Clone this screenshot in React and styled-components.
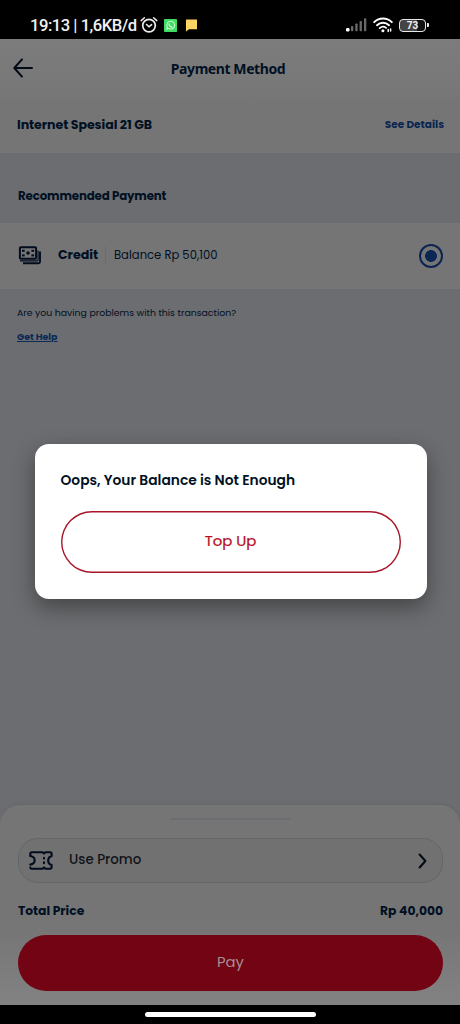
import React from "react";
import styled, { createGlobalStyle } from "styled-components";

const GlobalStyle = createGlobalStyle`
  * {
    box-sizing: border-box;
  }

  body {
    margin: 0;
    background: #000;
    font-family: "Poppins", "Inter", sans-serif;
    color: #011023;
  }

  h1, h2, p {
    margin: 0;
  }

  button {
    font-family: inherit;
    padding: 0;
  }
`;

//Icons
const AlarmIcon = () => (
  <svg width="18" height="18" viewBox="0 0 18 18" fill="none" stroke="#eee" strokeLinecap="round">
    <circle cx="9" cy="9.6" r="6.3" strokeWidth="1.7" />
    <path d="M1.2 4.6 4.4 1.8M16.8 4.6 13.6 1.8" strokeWidth="1.5" />
    <path d="m6.5 8.5 2.6 2.3 2.5-2.1" strokeWidth="1.6" />
  </svg>
);

const WhatsappIcon = () => (
  <svg width="13" height="13" viewBox="0 0 13 13">
    <rect width="13" height="13" rx="0.8" fill="#3fdc62" />
    <circle cx="6.7" cy="6.2" r="4" fill="none" stroke="#d5ffdc" strokeWidth="1" />
    <path d="m2 11 1-3.2 2 2Z" fill="#d5ffdc" />
    <path d="M5.1 4.5c0 2 1.5 3.5 3.4 3.6" fill="none" stroke="#d5ffdc" strokeWidth="1.3" />
  </svg>
);

const MessageIcon = () => (
  <svg width="13" height="13" viewBox="0 0 13 13">
    <path d="M1 0.5h11v9.7H4L1 12.5Z" fill="#ffd362" />
  </svg>
);

const SignalIcon = () => (
  <svg width="21" height="14" viewBox="0 0 21 14" fill="#6a6a6a">
    <rect x="0" y="10" width="3.5" height="3.4" rx="1.2" fill="#fff" />
    <rect x="5" y="8" width="2.3" height="5.2" rx="0.7" />
    <rect x="9.3" y="5.5" width="2.3" height="7.7" rx="0.7" />
    <rect x="13.6" y="3" width="2.3" height="10.2" rx="0.7" />
    <rect x="18" y="0.3" width="2.3" height="12.9" rx="0.7" />
  </svg>
);

const WifiIcon = () => (
  <svg width="20" height="16" viewBox="0 0 20 16" fill="none" stroke="#fff" strokeLinecap="round">
    <path d="M1.2 5.1c5-4.8 12.6-4.8 17.6 0" strokeWidth="2" />
    <path d="M4 8.2c3.5-3.2 8.5-3.2 12 0" strokeWidth="2" />
    <path d="M6.7 11.1c2-1.7 4.6-1.7 6.4-.2" strokeWidth="1.8" />
    <circle cx="9.9" cy="13.7" r="1.5" fill="#fff" stroke="none" />
    <path d="M15.2 12.4v2M17.6 12v2" strokeWidth="1.5" />
  </svg>
);

const BackIcon = () => (
  <svg width="20" height="20" viewBox="0 0 20 20" fill="none" stroke="#030b16" strokeWidth="2" strokeLinecap="round" strokeLinejoin="round">
    <path d="M9 1.4 1.3 10 9 18.6M1.3 10H19" />
  </svg>
);

const CashIcon = () => (
  <svg width="23" height="21" viewBox="0 0 23 21" fill="none" stroke="#020d1f" strokeLinejoin="round">
    <rect x="1.9" y="1.2" width="16.2" height="11.6" rx="1" strokeWidth="2" />
    <path d="M20.1 4.6v9q0 1.3-1.3 1.3H2" strokeWidth="1.1" />
    <path d="M22 5.4v10.4q0 1.5-1.5 1.5H5" strokeWidth="1.9" />
    <g fill="#020d1f" stroke="none">
      <circle cx="10" cy="7" r="1.8" />
      <rect x="4" y="3.8" width="2.7" height="2" />
      <rect x="13.4" y="3.8" width="2.7" height="2" />
      <rect x="4" y="8.4" width="2.7" height="2" />
      <rect x="13.4" y="8.4" width="2.7" height="2" />
    </g>
  </svg>
);

const TicketIcon = () => (
  <svg width="24" height="19" viewBox="0 0 24 19" fill="none" stroke="#020d1f" strokeWidth="2.1" strokeLinecap="round" strokeLinejoin="round">
    <path d="M1.3 4.8V2.7q0-1.4 1.5-1.4h10.8l1.4 1.3 1.4-1.3h4.7q1.5 0 1.5 1.4v2.2c-4.6 1.5-4.6 7.7 0 9.2v2.2q0 1.4-1.5 1.4h-4.7L15 16.4l-1.4 1.3H2.8q-1.5 0-1.5-1.2" />
    <path d="M1.3 5c5.8 1 5.8 7.4 0 8.6" />
    <path d="M15 6.9v.7M15 11.2v1" />
  </svg>
);

const ChevronIcon = () => (
  <svg width="9" height="16" viewBox="0 0 9 16" fill="none" stroke="#030b18" strokeWidth="2.1" strokeLinecap="round" strokeLinejoin="round">
    <path d="M1.6 1.5 7.4 8l-5.8 6.5" />
  </svg>
);

const StatusBar = () => (
  <CssStatus>
    <Clock>19:13 | 1,6KB/d</Clock>
    <AlarmIcon />
    <Notifications>
      <WhatsappIcon />
      <MessageIcon />
    </Notifications>
    <StatusRight>
      <SignalIcon />
      <WifiIcon />
      <Battery>73</Battery>
    </StatusRight>
  </CssStatus>
);

const App = () => {
  return (
    <Screen>
      <GlobalStyle />
      <StatusBar />
      <Page>
        <Header>
          <BackIcon />
          <Title>Payment Method</Title>
        </Header>
        <Package>
          <Label $size={12.6} $spacing={-0.08}>Internet Spesial 21 GB</Label>
          <DetailLink>See Details</DetailLink>
        </Package>
        <SectionTitle>
          <Label $size={11.8} $spacing={-0.14}>Recommended Payment</Label>
        </SectionTitle>
        <Method>
          <CashIcon />
          <MethodName>Credit</MethodName>
          <Balance>Balance Rp 50,100</Balance>
          <Radio />
        </Method>
        <Help>
          <p>Are you having problems with this transaction?</p>
          <HelpLink>Get Help</HelpLink>
        </Help>
        <Sheet>
          <Handle />
          <Promo>
            <TicketIcon />
            <PromoText>Use Promo</PromoText>
            <ChevronIcon />
          </Promo>
          <Total>
            <Label $size={12.3}>Total Price</Label>
            <Label $size={12.3}>Rp 40,000</Label>
          </Total>
          <PayButton>Pay</PayButton>
        </Sheet>
      </Page>
      <GestureBar>
        <Pill />
      </GestureBar>
      <Modal>
        <Dialog>
          <DialogTitle>Oops, Your Balance is Not Enough</DialogTitle>
          <TopUpButton>Top Up</TopUpButton>
        </Dialog>
      </Modal>
    </Screen>
  );
};

//Styled
const Screen = styled.div`
  position: relative;
  width: 460px;
  height: 1024px;
  display: flex;
  flex-direction: column;
  overflow: hidden;
`;

const CssStatus = styled.div`
  height: 39px;
  flex: none;
  display: flex;
  align-items: center;
  padding: 11px 34px 0 30px;
  background: #000;
  color: #f2f2f2;
`;

const Clock = styled.span`
  font-family: Roboto, sans-serif;
  font-size: 16.6px;
  font-weight: 500;
  letter-spacing: -0.48px;
  width: 110px;
  white-space: nowrap;
`;

const Notifications = styled.div`
  display: flex;
  gap: 8px;
  margin-left: 6px;
`;

const StatusRight = styled.div`
  display: flex;
  align-items: center;
  gap: 6px;
  margin-left: auto;
`;

const Battery = styled.div`
  width: 27px;
  height: 13px;
  border: 1.5px solid #e8e8e8;
  border-radius: 4px;
  background: linear-gradient(90deg, #444 68%, #111 68%);
  font: 700 10px/11px Roboto, sans-serif;
  text-align: center;
  position: relative;

  &::after {
    content: "";
    position: absolute;
    right: -4px;
    top: 3px;
    width: 2px;
    height: 4px;
    border-radius: 0 1px 1px 0;
    background: #e8e8e8;
  }
`;

const Page = styled.main`
  flex: 1;
  display: flex;
  flex-direction: column;
  background: #6c6d70;
`;

const Header = styled.header`
  height: 58px;
  display: grid;
  grid-template-columns: 20px 1fr 20px;
  align-items: center;
  padding: 0 17px 0 13px;
  background: linear-gradient(#7c7c7c, #777);
`;

const Title = styled.h1`
  font-family: "Noto Sans", sans-serif;
  font-size: 14px;
  font-weight: 700;
  letter-spacing: -0.42px;
  text-align: center;
`;

const Label = styled.span`
  font-size: ${({ $size }) => $size}px;
  font-weight: 700;
  letter-spacing: ${({ $spacing }) => $spacing || 0}px;
`;

const Package = styled.section`
  height: 56px;
  display: flex;
  align-items: center;
  justify-content: space-between;
  padding: 0 16px 0 17px;
  background: #757575;
`;

const DetailLink = styled.a`
  font-size: 10.5px;
  font-weight: 700;
  color: #0a2550;
`;

const SectionTitle = styled.div`
  height: 70px;
  padding: 16px 18px 0;
  display: flex;
  align-items: center;
`;

const Method = styled.section`
  height: 66px;
  display: flex;
  align-items: center;
  padding: 0 17px 0 18px;
  background: #757575;
`;

const MethodName = styled.span`
  margin: 0 0 2px 17px;
  width: 48px;
  border-right: 1px solid #6b6d70;
  font-size: 12.6px;
  line-height: 18px;
  font-weight: 700;
`;

const Balance = styled.span`
  margin: 0 0 2px 8px;
  font-size: 11.6px;
`;

const Radio = styled.span`
  width: 24px;
  height: 24px;
  margin-left: auto;
  border: 2px solid #0a2552;
  border-radius: 50%;
  background: radial-gradient(circle, #0a2756 5.6px, transparent 6.2px);
`;

const Help = styled.section`
  padding: 16px 17px;
  display: flex;
  flex-direction: column;
  align-items: flex-start;
  gap: 8px;
  font-size: 9.35px;
  line-height: 16px;
`;

const HelpLink = styled.a`
  font-size: 9.4px;
  font-weight: 700;
  color: #0a2a58;
  text-decoration: underline;
`;

const Sheet = styled.footer`
  height: 200px;
  margin-top: auto;
  padding: 13px 17px 0 18px;
  border-radius: 20px 20px 0 0;
  background: linear-gradient(#757575 60%, #828282);
  box-shadow: 0 -1px 3px #65666b;
`;

const Handle = styled.div`
  width: 120px;
  height: 2px;
  margin: 0 auto 18px;
  background: #6c6d70;
`;

const Promo = styled.div`
  height: 45px;
  display: flex;
  align-items: center;
  padding: 0 15px 0 10px;
  border: 1px solid #62676a;
  border-radius: 20px;
  background: #717171;
`;

const PromoText = styled.span`
  flex: 1;
  margin: 0 0 1px 16px;
  font-size: 13.4px;
  font-weight: 500;
  color: #101318;
`;

const Total = styled.div`
  display: flex;
  justify-content: space-between;
  margin: 20px 0 16px;
  line-height: 16px;
`;

const PayButton = styled.button`
  width: 100%;
  height: 56px;
  padding-bottom: 2px;
  border: 0;
  border-radius: 28px;
  background: #720413;
  color: #a58e92;
  font-size: 14.8px;
  font-weight: 400;
`;

const GestureBar = styled.div`
  height: 19px;
  flex: none;
  display: flex;
  justify-content: center;
  padding-top: 7px;
  background: #000;
`;

const Pill = styled.span`
  width: 171px;
  height: 5px;
  border-radius: 3px;
  background: #fff;
`;

const Modal = styled.div`
  position: absolute;
  inset: 0;
  display: flex;
  align-items: center;
  justify-content: center;
  padding: 19px 0 0 1px;
`;

const Dialog = styled.div`
  width: 392px;
  height: 155px;
  padding: 26px;
  border-radius: 14px;
  background: #fff;
  box-shadow: 0 8px 22px rgba(0, 0, 0, 0.38);
`;

const DialogTitle = styled.h2`
  font-size: 13.8px;
  line-height: 22px;
  font-weight: 600;
`;

const TopUpButton = styled.button`
  width: 100%;
  height: 62px;
  margin-top: 19px;
  padding-bottom: 3px;
  border: 0;
  border-radius: 31px;
  background: #fff;
  box-shadow: inset 0 0 0 1.4px #a91529;
  color: #b90d24;
  font-size: 14.9px;
  font-weight: 400;
  -webkit-text-stroke: 0.2px #b90d24;
`;

export default App;
